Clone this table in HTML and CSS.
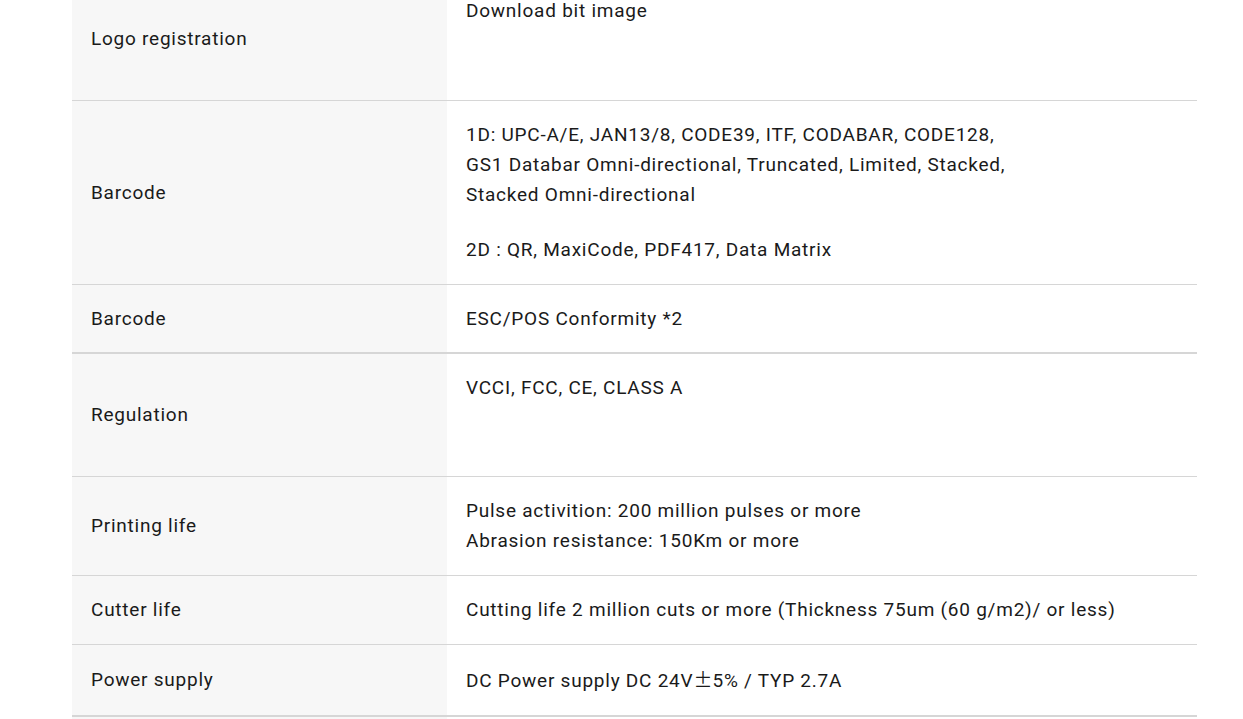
FILE: index.html
```html
<!DOCTYPE html>
<html lang="en">
<head>
<meta charset="utf-8">
<title>Specifications</title>
<link rel="stylesheet" href="styles.css">
</head>
<body>
<div class="page">
  <div class="spec">
    <div class="row">
      <div class="label">Logo registration</div>
      <div class="value"><p>Download bit image</p><p>&nbsp;</p></div>
    </div>
    <div class="row">
      <div class="label">Barcode</div>
      <div class="value"><p>1D: UPC-A/E, JAN13/8, CODE39, ITF, CODABAR, CODE128,<br>GS1 Databar Omni-directional, Truncated, Limited, Stacked,<br>Stacked Omni-directional</p><p>2D : QR, MaxiCode, PDF417, Data Matrix</p></div>
    </div>
    <div class="row row-short">
      <div class="label">Barcode</div>
      <div class="value"><p>ESC/POS Conformity *2</p></div>
    </div>
  </div>
  <div class="spec">
    <div class="row">
      <div class="label">Regulation</div>
      <div class="value"><p>VCCI, FCC, CE, CLASS A</p><p class="blank">&nbsp;</p></div>
    </div>
    <div class="row">
      <div class="label">Printing life</div>
      <div class="value"><p>Pulse activition: 200 million pulses or more<br>Abrasion resistance: 150Km or more</p></div>
    </div>
    <div class="row">
      <div class="label">Cutter life</div>
      <div class="value"><p>Cutting life 2 million cuts or more (Thickness 75um (60 g/m2)/ or less)</p></div>
    </div>
    <div class="row">
      <div class="label">Power supply</div>
      <div class="value"><p>DC Power supply DC 24V<span class="cjk">±</span>5% / TYP 2.7A</p></div>
    </div>
  </div>
  <div class="spec">
    <div class="row">
      <div class="label">Dimensions</div>
      <div class="value"><p>&nbsp;</p></div>
    </div>
  </div>
</div>
</body>
</html>
```

FILE: styles.css
```css
html, body {
  margin: 0;
  padding: 0;
  background: #ffffff;
}
body {
  font-family: Roboto, "Noto Sans CJK JP", sans-serif;
  font-size: 19px;
  color: #1a1a1a;
  letter-spacing: 0.04em;
}
.cjk {
  font-family: "Noto Sans CJK JP", sans-serif;
  letter-spacing: 0;
}
.page {
  width: 1125px;
  margin: -24px 0 0 72px;
}
.spec {
  border-top: 1px solid #d6d6d6;
  border-bottom: 1px solid #d6d6d6;
}
.row {
  display: grid;
  grid-template-columns: 375px 1fr;
  border-top: 1px solid #d6d6d6;
}
.row:first-child {
  border-top: none;
}
.label {
  background: #f7f7f7;
  display: flex;
  align-items: center;
  padding: 16px 19px;
  line-height: 30px;
}
.value {
  padding: 19px 19px 19px;
  line-height: 30px;
}
.row-short .value {
  padding-bottom: 18px;
}
.value p {
  margin: 0;
}
.value p + p {
  margin-top: 25px;
}
.value p.blank {
  margin-top: 24px;
}
```
